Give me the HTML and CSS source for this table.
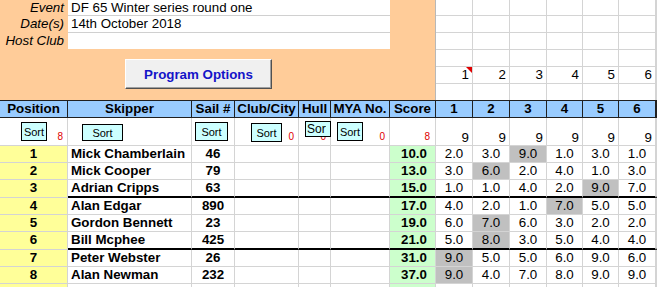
FILE: index.html
```html
<!DOCTYPE html>
<html>
<head>
<meta charset="utf-8">
<link rel="stylesheet" href="styles.css">
</head>
<body>
<div class="sheet">
  <div class="top">
    <div class="info">
      <div class="fields">
        <div class="label">Event</div><div class="value">DF 65 Winter series round one</div>
        <div class="label">Date(s)</div><div class="value">14th October 2018</div>
        <div class="label">Host Club</div><div class="value last"></div>
      </div>
      <div class="btn-row"><button class="prog-btn">Program Options</button></div>
    </div>
    <div class="blank">
      <div></div><div></div><div></div><div></div><div></div><div></div><div></div>
      <div></div><div></div><div></div><div></div><div></div><div></div><div></div>
      <div></div><div></div><div></div><div></div><div></div><div></div><div></div>
      <div></div><div></div><div></div><div></div><div></div><div></div><div></div>
      <div class="num flag">1</div><div class="num">2</div><div class="num">3</div><div class="num">4</div><div class="num">5</div><div class="num">6</div><div></div>
      <div class="end"></div><div class="end"></div><div class="end"></div><div class="end"></div><div class="end"></div><div class="end"></div><div class="end"></div>
    </div>
  </div>

  <div class="row head">
    <div>Position</div><div>Skipper</div><div>Sail #</div><div>Club/City</div><div>Hull</div><div>MYA No.</div><div>Score</div>
    <div>1</div><div>2</div><div>3</div><div>4</div><div>5</div><div>6</div><div></div>
  </div>

  <div class="row sortrow">
    <div class="cnt">8</div><div></div><div></div><div class="cnt">0</div><div class="cnt">0</div><div class="cnt">0</div><div class="cnt sc">8</div>
    <div class="nine">9</div><div class="nine">9</div><div class="nine">9</div><div class="nine">9</div><div class="nine">9</div><div class="nine">9</div><div></div>
    <button class="sort s-pos">Sort</button>
    <button class="sort s-skip">Sort</button>
    <button class="sort s-sail">Sort</button>
    <button class="sort s-club">Sort</button>
    <button class="sort s-hull"><span>Sort</span></button>
    <button class="sort s-mya">Sort</button>
  </div>

  <div class="row data">
    <div class="pos">1</div><div class="name">Mick Chamberlain</div><div class="sail">46</div><div></div><div></div><div></div><div class="score">10.0</div>
    <div>2.0</div><div>3.0</div><div class="drop">9.0</div><div>1.0</div><div>3.0</div><div>1.0</div><div></div>
  </div>
  <div class="row data">
    <div class="pos">2</div><div class="name">Mick Cooper</div><div class="sail">79</div><div></div><div></div><div></div><div class="score">13.0</div>
    <div>3.0</div><div class="drop">6.0</div><div>2.0</div><div>4.0</div><div>1.0</div><div>3.0</div><div></div>
  </div>
  <div class="row data thick">
    <div class="pos">3</div><div class="name">Adrian Cripps</div><div class="sail">63</div><div></div><div></div><div></div><div class="score">15.0</div>
    <div>1.0</div><div>1.0</div><div>4.0</div><div>2.0</div><div class="drop">9.0</div><div>7.0</div><div></div>
  </div>
  <div class="row data">
    <div class="pos">4</div><div class="name">Alan Edgar</div><div class="sail">890</div><div></div><div></div><div></div><div class="score">17.0</div>
    <div>4.0</div><div>2.0</div><div>1.0</div><div class="drop">7.0</div><div>5.0</div><div>5.0</div><div></div>
  </div>
  <div class="row data">
    <div class="pos">5</div><div class="name">Gordon Bennett</div><div class="sail">23</div><div></div><div></div><div></div><div class="score">19.0</div>
    <div>6.0</div><div class="drop">7.0</div><div>6.0</div><div>3.0</div><div>2.0</div><div>2.0</div><div></div>
  </div>
  <div class="row data thick">
    <div class="pos">6</div><div class="name">Bill Mcphee</div><div class="sail">425</div><div></div><div></div><div></div><div class="score">21.0</div>
    <div>5.0</div><div class="drop">8.0</div><div>3.0</div><div>5.0</div><div>4.0</div><div>4.0</div><div></div>
  </div>
  <div class="row data">
    <div class="pos">7</div><div class="name">Peter Webster</div><div class="sail">26</div><div></div><div></div><div></div><div class="score">31.0</div>
    <div class="drop">9.0</div><div>5.0</div><div>5.0</div><div>6.0</div><div>9.0</div><div>6.0</div><div></div>
  </div>
  <div class="row data">
    <div class="pos">8</div><div class="name">Alan Newman</div><div class="sail">232</div><div></div><div></div><div></div><div class="score">37.0</div>
    <div class="drop">9.0</div><div>4.0</div><div>7.0</div><div>8.0</div><div>9.0</div><div>9.0</div><div></div>
  </div>
  <div class="row data">
    <div class="pos"></div><div class="name"></div><div class="sail"></div><div></div><div></div><div></div><div class="score"></div>
    <div></div><div></div><div></div><div></div><div></div><div></div><div></div>
  </div>
</div>
</body>
</html>
```

FILE: styles.css
```css
* { box-sizing: border-box; margin: 0; padding: 0; }
html, body { width: 657px; height: 287px; overflow: hidden; background: #fff; }
body { font-family: "Liberation Sans", Arial, sans-serif; font-size: 13.33px; color: #000; }

.sheet { width: 657px; }

.top { display: flex; height: 100px; }
.info { width: 435px; background: #FFCC99; }
.fields { display: grid; grid-template-columns: 68px 322px; grid-template-rows: 16px 17px 16px; }
.label { font-style: italic; text-align: right; padding-right: 4px; line-height: 15px; }
.value { background: #fff; padding-left: 3px; line-height: 15px; border-bottom: 1px solid #d0d0d0; }
.value.last { border-bottom: 0; }

.btn-row { padding: 10px 0 0 125px; }
.prog-btn {
  width: 147px; height: 30px;
  background: #F0F0F0;
  border: 1px solid; border-color: #ffffff #505050 #505050 #ffffff;
  box-shadow: inset -1px -1px 0 #a0a0a0;
  font-family: "Liberation Sans", Arial, sans-serif; font-size: 13.33px; font-weight: bold;
  color: #1414C8;
}

.blank {
  flex: 1; border-left: 1px solid #b8b8b8;
  display: grid;
  grid-template-columns: 37px 37px 37px 36px 36px 37px 1fr;
  grid-template-rows: 16px 17px 17px 17px 17px 16px;
}
.blank > div { border-right: 1px solid #d4d4d4; border-bottom: 1px solid #d4d4d4; }
.blank > div.end { border-bottom: 0; }
.blank .num { text-align: right; padding-right: 3px; line-height: 16px; position: relative; }
.flag::after {
  content: ""; position: absolute; top: 0; right: 0;
  border-top: 6px solid #e00000; border-left: 6px solid transparent;
}

.row {
  display: grid;
  grid-template-columns: 68px 124px 43px 64px 32px 59px 46px 37px 37px 37px 36px 36px 37px 1fr;
}
.row > div { border-right: 1px solid #d4d4d4; border-bottom: 1px solid #d4d4d4; }

.head { height: 18px; background: #99CCFF; border-top: 1px solid #202020; }
.head > div { border-right-color: #202020; border-bottom-color: #202020; font-weight: bold; text-align: center; line-height: 16px; }

.sortrow { height: 28px; position: relative; }
.sortrow > div { display: flex; align-items: flex-end; justify-content: flex-end; }
.cnt { color: #e00000; font-size: 10px; line-height: 12px; padding: 0 4px 2px 0; }
.cnt.sc { padding-right: 5px; }
.nine { padding: 0 3px 0 0; line-height: 15px; }

.sort {
  position: absolute;
  background: #CCFFFF; border: 1px solid #000;
  font-family: "Liberation Sans", Arial, sans-serif; font-size: 11px; color: #000;
  overflow: hidden; white-space: nowrap;
}
.s-pos { left: 21px; top: 4px; width: 26px; height: 19px; }
.s-skip { left: 82px; top: 6px; width: 41px; height: 17px; }
.s-sail { left: 195px; top: 4px; width: 33px; height: 19px; }
.s-club { left: 251px; top: 5px; width: 31px; height: 19px; }
.s-hull { left: 305px; top: 3px; width: 26px; height: 16px; font-size: 12px; text-align: left; padding-left: 1px; }
.s-hull span { display: block; width: 19px; overflow: hidden; line-height: 13px; }
.s-mya { left: 337px; top: 4px; width: 26px; height: 19px; }

.data { height: 17px; }
.data > div { line-height: 16px; text-align: center; }
.data .pos { background: #FFFF99; font-weight: bold; }
.data .name { font-weight: bold; text-align: left; padding-left: 3px; }
.data .sail { font-weight: bold; }
.data .score { background: #CCFFCC; font-weight: bold; text-align: right; padding-right: 8px; }
.data .drop { background: #C0C0C0; }

.thick { height: 18px; }
.thick > div { border-bottom: 2px solid #000; }
.thick > div.pos { border-bottom: 1px solid #d4d4d4; }
```
